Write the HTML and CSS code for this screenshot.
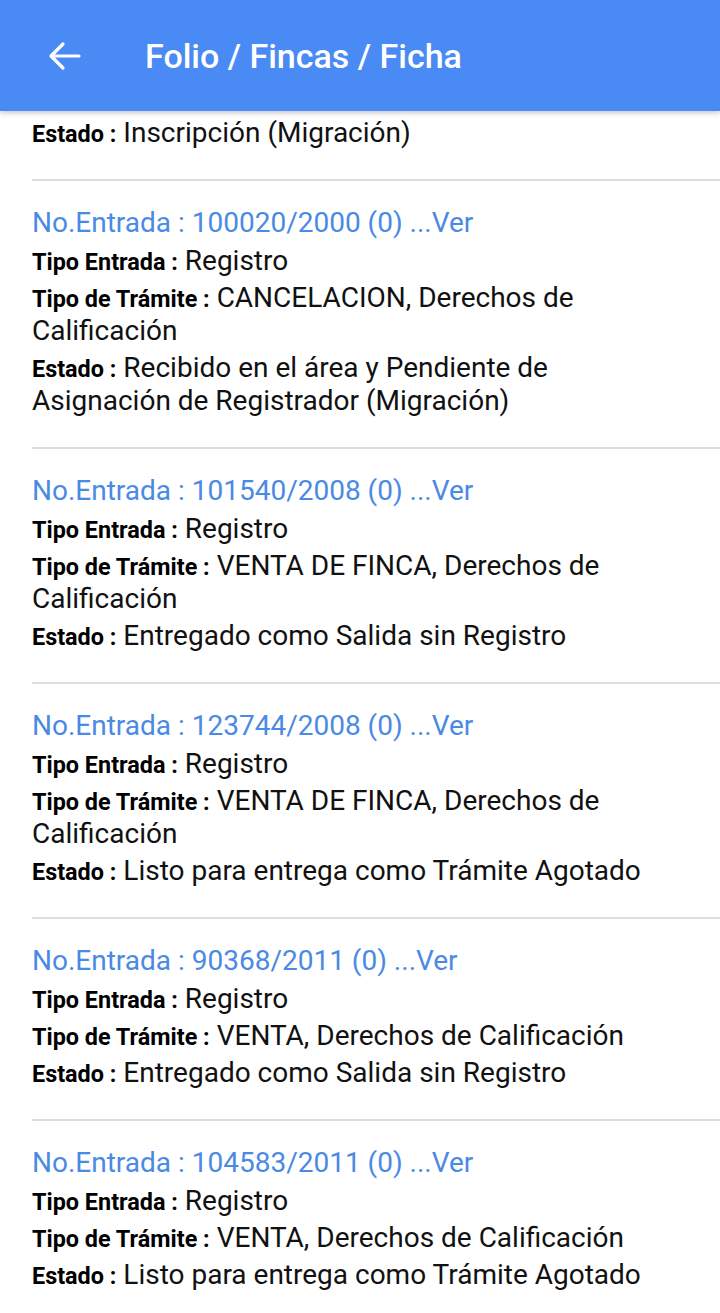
FILE: index.html
```html
<!DOCTYPE html>
<html lang="es">
<head>
<meta charset="utf-8">
<title>Folio / Fincas / Ficha</title>
<link rel="stylesheet" href="styles.css">
</head>
<body>
<div class="app">
  <header class="toolbar">
    <button class="back" aria-label="Atrás">
      <svg width="34" height="30" viewBox="0 0 34 30"><path d="M32 15H4M16 3L4 15l12 12" fill="none" stroke="#fff" stroke-width="3.2" stroke-linecap="round" stroke-linejoin="round"/></svg>
    </button>
    <h1 class="title">Folio / Fincas / Ficha</h1>
  </header>
  <main class="list">
    <section class="item partial">
      <p class="row"><b class="label">Estado :</b> Inscripción (Migración)</p>
    </section>
    <section class="item">
      <p class="link">No.Entrada : 100020/2000 (0) ...Ver</p>
      <p class="row"><b class="label">Tipo Entrada :</b> Registro</p>
      <p class="row"><b class="label">Tipo de Trámite :</b> CANCELACION, Derechos de Calificación</p>
      <p class="row"><b class="label">Estado :</b> Recibido en el área y Pendiente de Asignación de Registrador (Migración)</p>
    </section>
    <section class="item">
      <p class="link">No.Entrada : 101540/2008 (0) ...Ver</p>
      <p class="row"><b class="label">Tipo Entrada :</b> Registro</p>
      <p class="row"><b class="label">Tipo de Trámite :</b> VENTA DE FINCA, Derechos de Calificación</p>
      <p class="row"><b class="label">Estado :</b> Entregado como Salida sin Registro</p>
    </section>
    <section class="item">
      <p class="link">No.Entrada : 123744/2008 (0) ...Ver</p>
      <p class="row"><b class="label">Tipo Entrada :</b> Registro</p>
      <p class="row"><b class="label">Tipo de Trámite :</b> VENTA DE FINCA, Derechos de Calificación</p>
      <p class="row"><b class="label">Estado :</b> Listo para entrega como Trámite Agotado</p>
    </section>
    <section class="item">
      <p class="link">No.Entrada : 90368/2011 (0) ...Ver</p>
      <p class="row"><b class="label">Tipo Entrada :</b> Registro</p>
      <p class="row"><b class="label">Tipo de Trámite :</b> VENTA, Derechos de Calificación</p>
      <p class="row"><b class="label">Estado :</b> Entregado como Salida sin Registro</p>
    </section>
    <section class="item">
      <p class="link">No.Entrada : 104583/2011 (0) ...Ver</p>
      <p class="row"><b class="label">Tipo Entrada :</b> Registro</p>
      <p class="row"><b class="label">Tipo de Trámite :</b> VENTA, Derechos de Calificación</p>
      <p class="row"><b class="label">Estado :</b> Listo para entrega como Trámite Agotado</p>
    </section>
  </main>
</div>
</body>
</html>
```
FILE: styles.css
```css
html, body {
  margin: 0;
  padding: 0;
  background: #fff;
  height: 100%;
  overflow: hidden;
}
.app {
  display: flex;
  flex-direction: column;
  font-family: Roboto, "Noto Sans", sans-serif;
  color: #111;
}
.toolbar {
  height: 111px;
  background: #4a8af4;
  display: flex;
  align-items: center;
  box-shadow: 0 2px 5px rgba(0, 0, 0, 0.22);
  position: relative;
  z-index: 1;
  flex-shrink: 0;
}
.back {
  background: none;
  border: 0;
  padding: 0;
  margin-left: 47px;
  width: 34px;
  height: 30px;
  display: flex;
  align-items: center;
}
.title {
  margin: 0 0 0 64px;
  color: #fff;
  font-size: 34px;
  font-weight: 500;
  letter-spacing: 0;
}
.list {
  display: flex;
  flex-direction: column;
}
.item {
  margin-left: 32px;
  border-top: 2px solid #dedede;
  padding: 25px 30px 30px 0;
}
.item.partial {
  border-top: 0;
  padding-top: 5px;
}
.item p {
  margin: 0 0 4px;
  line-height: 33px;
}
.item p:last-child {
  margin-bottom: 0;
}
.link {
  color: #4a8ae4;
  font-size: 28px;
  margin-bottom: 5px !important;
}
.row {
  font-size: 28px;
  color: #111;
}
.label {
  font-size: 23.4px;
  line-height: 1;
  font-weight: 700;
  color: #000;
}
```
